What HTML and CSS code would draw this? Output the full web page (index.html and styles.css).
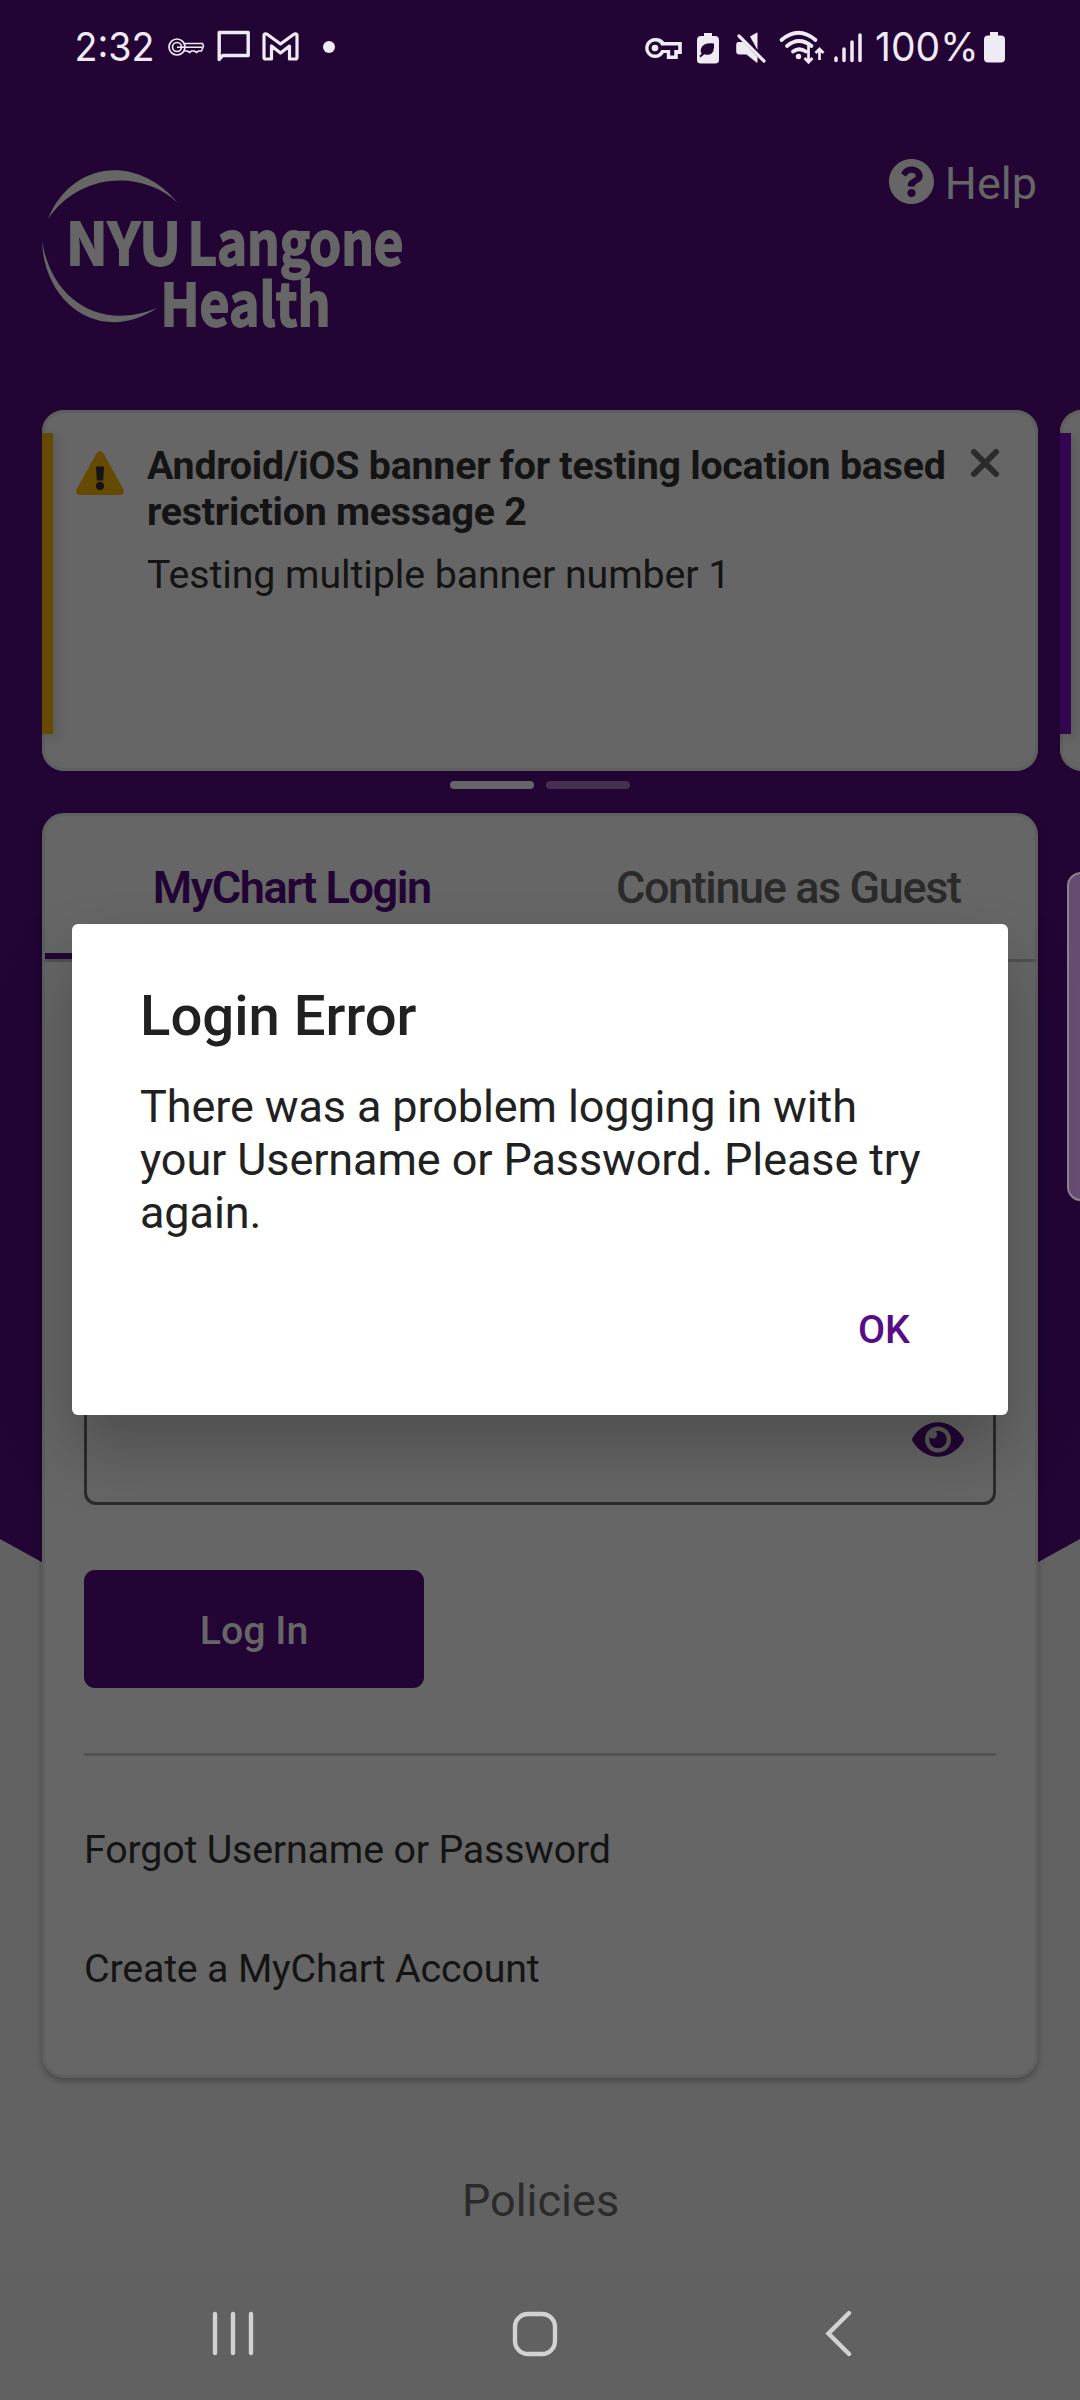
FILE: index.html
```html
<!DOCTYPE html>
<html lang="en">
<head>
<meta charset="utf-8">
<title>MyChart Login</title>
<link rel="stylesheet" href="styles.css">
</head>
<body>
<div class="screen">
  <header class="status">
    <svg class="status-left" viewBox="0 0 300 95" width="300" height="95">
      <text class="clock" x="14.500" y="61" textLength="80" lengthAdjust="spacingAndGlyphs">2:32</text>
      <g transform="translate(-60 0)" class="line">
        <circle cx="177" cy="47" r="8" stroke-width="1.7"/>
        <circle cx="177" cy="47" r="4.5" stroke-width="1.7"/>
        <path d="M184 43.5h18.500l1 2.500l-2 5h-3l-2 1.500l-2-1.500h-3l-2 1.500l-2-1.500h-4M177 47.300h25" stroke-width="1.600"/>
        <path d="M219.200 32.500h29v23h-25.500l-3.500 4z" stroke-width="3.400" stroke-linejoin="round"/>
        <path d="M264 35q1-2 3.500-.5l13 9.500l13-9.500q2.500-1.500 3.500 .5v22.500q0 1.500-1.500 1.500h-6v-13l-9 7l-9-7v13h-6q-1.500 0-1.500-1.500z" stroke-width="3.200" stroke-linejoin="round"/>
      </g>
      <circle cx="269" cy="47" r="6" class="solid"/>
    </svg>
    <svg class="status-right" viewBox="630 0 400 95" width="400" height="95">
      <path class="solid" fill-rule="evenodd" d="M655 38a10 10 0 0 1 9.200 4h17.600v12h-4v5h-11v-6h-3a10 10 0 1 1-8.800-15zm0 3.600a6.500 6.500 0 1 0 6.200 8.400h9v5.500h4v-5.500h4v-4.500h-17a6.500 6.500 0 0 0-6.200-3.900z"/>
      <circle class="solid" cx="655" cy="48" r="3.300"/>
      <path class="solid" fill-rule="evenodd" d="M704 33h8v3h3q4 0 4 4v20q0 3.500-4 3.500h-14q-4 0-4-3.500v-20q0-4 4-4h3zM714 43.500q-11-1-13 5q-1.200 3 .6 5.500l-2.200 1.700l1 1.800l4-3.300q7 2 9-3.500q1-3 .6-7.200z"/>
      <path class="solid" d="M750 36.500l7-4q.5-.2.500 1v16.500zM738 42h5l14.500 15v5q0 1-1 .5l-10-8h-7q-3.300 0-3.300-3v-6q0-3.500 1.800-3.500z"/>
      <path class="line" d="M739 36l25 25" stroke-width="3.200" stroke-linecap="round"/>
      <g class="line" stroke-width="3.800" stroke-linecap="round"><path d="M781.500 40q17-14.500 34 0M787 46q12-10 24.500 0M793 51.500q6-4.500 13 0"/></g>
      <circle class="solid" cx="798.500" cy="56.500" r="2.700"/>
      <path class="line" d="M808.500 43v19M804.500 58l4 4.200l4-4.200M819.500 60v-10M815.500 53l4-4l4 4" stroke-width="2.700"/>
      <path class="line" d="M836 58v2.500M844 49v11.500M852 42v18.500M860 35v25.500" stroke-width="3.500" stroke-linecap="round"/>
      <text class="clock" x="875" y="61" textLength="103.500" lengthAdjust="spacingAndGlyphs">100%</text>
      <path class="solid" d="M990 32h8v3.500h3q4 0 4 4v19q0 4-4 4h-13q-4 0-4-4v-19q0-4 4-4h2z"/>
    </svg>
  </header>

  <div class="brand">
    <svg class="logo" viewBox="42 170 362 158" width="362" height="158">
      <path d="M48 219C71 162 136 153 178 203C142 169 79 173 48 219z"/>
      <path d="M42 241C44 305 102 345 157 308C101 331 52 301 42 241z"/>
      <text x="66" y="264.500" textLength="115" lengthAdjust="spacingAndGlyphs">NYU</text>
      <text x="187.500" y="264.500" textLength="216" lengthAdjust="spacingAndGlyphs">Langone</text>
      <text x="160.500" y="325.500" textLength="170" lengthAdjust="spacingAndGlyphs">Health</text>
    </svg>
    <div class="help">
      <svg viewBox="8 8 496 496" width="45" height="45"><path d="M504 256c0 137-111 248-248 248S8 393 8 256 119 8 256 8s248 111 248 248zM262.700 90c-54.500 0-89.300 23-116.500 63.800-3.500 5.300-2.400 12.400 2.700 16.300l34.700 26.300c5.200 3.900 12.600 3 16.700-2.100 17.900-22.700 30.100-35.800 57.300-35.800 20.400 0 45.700 13.100 45.700 33 0 15-12.400 22.700-32.500 34C247.100 238.500 216 254.900 216 296v4c0 6.600 5.400 12 12 12h56c6.600 0 12-5.400 12-12v-1.300c0-28.500 83.200-29.600 83.200-106.700 0-58-60.200-102-116.500-102zM256 338c-25.400 0-46 20.600-46 46s20.600 46 46 46 46-20.600 46-46-20.600-46-46-46z"/></svg>
      <span>Help</span>
    </div>
  </div>

  <div class="banners">
    <section class="banner">
      <div class="accent amber"></div>
      <svg class="warn" viewBox="0 0 48 44" width="48" height="44"><path class="tri" d="M20.500 2.500q3.500-4.500 7 0l20 36q1.500 4.500-3 5.500h-41q-4.500-1-3-5.500z"/><path class="mark" d="M20 15.500h8l-.8 14h-6.400z"/><circle class="mark" cx="24" cy="35" r="4.200"/></svg>
      <div class="banner-text">
        <h2>Android/iOS banner for testing location based restriction message 2</h2>
        <p>Testing multiple banner number 1</p>
      </div>
      <svg class="close" viewBox="0 0 30 30" width="30" height="30"><path d="M4 4l22 22M26 4l-22 22"/></svg>
    </section>
    <section class="banner"><div class="accent purple"></div></section>
  </div>
  <div class="dots"><i class="on"></i><i></i></div>

  <main class="card">
    <nav class="tabs"><div class="tab active">MyChart Login</div><div class="tab">Continue as Guest</div></nav>
    <div class="form">
      <div class="field">
        <svg viewBox="0 0 52 35" width="52" height="35"><path class="eye" d="M.5 16C13-5 39-5 51.500 16q1 1.500 0 3C39 40 13 40 .5 19q-1-1.500 0-3z"/><circle class="iris" cx="26" cy="17.500" r="13"/><circle class="eye" cx="26" cy="17.500" r="8.700"/><circle class="iris" cx="21" cy="12.500" r="4"/></svg>
      </div>
      <div class="button">Log In</div>
      <hr>
      <div class="link">Forgot Username or Password</div>
      <div class="link">Create a MyChart Account</div>
    </div>
  </main>
  <div class="policies">Policies</div>

  <footer class="navbar">
    <svg viewBox="0 0 1080 134" width="1080" height="134"><path d="M215 48v39M233 48v39M251 48v39M849 47l-20.500 20.500l20.500 20.500"/><rect x="515" y="48" width="40" height="40" rx="13"/></svg>
  </footer>

  <div class="edge-handle"></div>
  <div class="dialog">
    <h1>Login Error</h1>
    <p>There was a problem logging in with your Username or Password. Please try again.</p>
    <div class="ok">OK</div>
  </div>
</div>
</body>
</html>
```
FILE: styles.css
```css
* { box-sizing: border-box; }
body { margin: 0; font-family: Roboto, sans-serif; color: #141414; }
h1, h2, p { margin: 0; }
svg { display: block; flex: none; overflow: visible; }

.screen {
  position: relative;
  display: flex;
  flex-direction: column;
  width: 1080px;
  height: 2400px;
  overflow: hidden;
  background: #626262;
}
/* purple backdrop that ends in a downward point behind the card */
.screen::before {
  content: "";
  position: absolute;
  inset: 0 0 auto;
  height: 1837px;
  background: #220535;
  clip-path: polygon(0 0, 100% 0, 100% 1539px, 50% 1837px, 0 1539px);
}
.status, .brand, .banners, .dots, .card, .policies, .navbar { position: relative; flex: none; }

.status { display: flex; justify-content: space-between; height: 95px; padding: 0 50px 0 60px; }
.clock { font: 400 39.5px Inter, sans-serif; fill: #f0eaf4; }
.line { fill: none; stroke: #f0eaf4; }
.solid { fill: #f0eaf4; }

.brand {
  display: flex;
  justify-content: space-between;
  align-items: flex-start;
  height: 315px;
  padding: 75px 43px 0 42px;
}
.logo { fill: #666; font: 700 58.5px "Noto Sans CJK SC", "Open Sans", sans-serif; }
.logo text { stroke: #666; stroke-width: 1.8px; }
.help { display: flex; align-items: center; gap: 11px; margin-top: -13px; font-size: 45px; line-height: 53px; color: #666; fill: #666; }
.help svg { margin-top: -5px; }

.banners { display: flex; gap: 22px; height: 361px; padding-left: 42px; }
.banner {
  display: flex;
  flex: none;
  align-items: flex-start;
  width: 996px;
  height: 361px;
  overflow: hidden;
  border-radius: 22px;
  background: #666;
  box-shadow: inset 0 0 0 3px #5f5f5f;
}
.accent { flex: none; width: 11px; height: 301px; margin-top: 23px; box-shadow: 3px 4px 12px rgba(0, 0, 0, .16); }
.amber { background: #664a00; }
.purple { background: #31054f; }
.warn { margin: 41px 0 0 23px; }
.tri { fill: #664a00; }
.mark { fill: #141414; }
.banner-text { width: 810px; margin: 33px 0 0 23px; font-size: 39.375px; line-height: 46px; letter-spacing: -.1px; }
.banner-text h2 { font-size: inherit; font-weight: 700; letter-spacing: -.25px; }
.banner-text p { margin-top: 17px; }
.close { margin: 38px 0 0 13px; fill: none; stroke: #2b2b2b; stroke-width: 6; stroke-linecap: round; }

.dots { display: flex; justify-content: center; gap: 12px; height: 42px; padding-top: 10px; }
.dots i { width: 84px; height: 8px; border-radius: 4px; background: #43314f; }
.dots .on { background: #666; }

.card {
  width: 996px;
  height: 1265px;
  margin-left: 42px;
  border: 3px solid #5f5f5f;
  border-radius: 22px;
  background: #666;
  box-shadow: 0 3px 6px rgba(0, 0, 0, .28);
}
.tabs { display: flex; height: 146px; border-bottom: 3px solid #515151; }
.tab {
  flex: 1;
  padding-top: 45px;
  border-bottom: 6px solid transparent;
  font-size: 45px;
  font-weight: 500;
  line-height: 53px;
  letter-spacing: -1.4px;
  text-align: center;
  color: #2b2b2b;
}
.tab.active { padding-right: 3px; border-color: #220535; color: #220535; font-weight: 600; }
.form { padding: 407px 39px 0; }
.field {
  display: flex;
  justify-content: flex-end;
  align-items: center;
  height: 136px;
  padding: 4px 29px 0 0;
  border: 3px solid #2b2b2b;
  border-radius: 12px;
}
.eye { fill: #220535; }
.iris { fill: #5c5c5c; }
.button {
  width: 340px;
  height: 118px;
  margin-top: 65px;
  border-radius: 11px;
  background: #220535;
  color: #666;
  font-size: 39.375px;
  font-weight: 500;
  line-height: 122px;
  text-align: center;
}
hr { height: 3px; margin: 65px 0 71px; border: 0; background: #525252; }
.link { margin-bottom: 73px; font-size: 39.375px; line-height: 46px; letter-spacing: -.18px; }

.policies { height: 188px; padding: 96px 0 0 1px; text-align: center; font-size: 45px; line-height: 53px; color: #2b2b2b; }
.navbar { height: 134px; background: #616161; }
.navbar svg { fill: none; stroke: #d2d2d2; stroke-width: 4.4; stroke-linecap: round; }

.edge-handle {
  position: absolute;
  top: 872px;
  left: 1067px;
  width: 30px;
  height: 329px;
  border: 2px solid #8d8290;
  border-radius: 14px;
  background: #654d72;
}
.dialog {
  position: absolute;
  top: 924px;
  left: 72px;
  width: 936px;
  height: 491px;
  padding: 59px 68px 0;
  border-radius: 6px;
  background: #fff;
  box-shadow: 0 34px 68px rgba(0, 0, 0, .24);
  color: #212121;
}
.dialog h1 { font-size: 56.25px; font-weight: 500; line-height: 66px; }
.dialog p { margin-top: 31px; font-size: 45px; line-height: 53px; letter-spacing: -.11px; }
.ok { margin: 68px 30px 0 0; text-align: right; font-size: 39.375px; font-weight: 500; line-height: 46px; color: #570d87; }
```
